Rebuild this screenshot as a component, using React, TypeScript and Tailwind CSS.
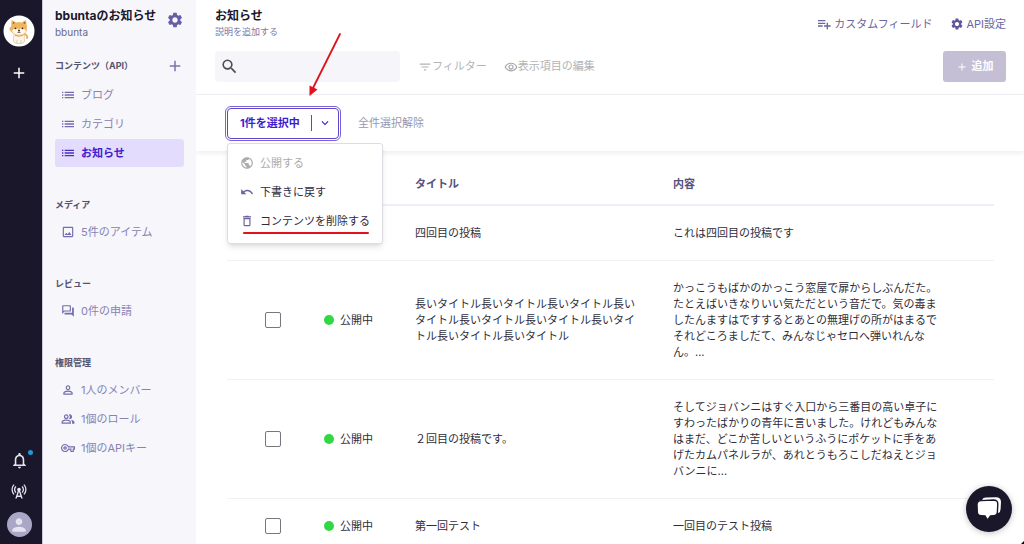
import React from 'react';
import {
  MdAdd,
  MdCellTower,
  MdExpandMore,
  MdFilterList,
  MdList,
  MdNotificationsNone,
  MdOutlineDelete,
  MdOutlineForum,
  MdOutlineImage,
  MdOutlinePeopleAlt,
  MdOutlineRemoveRedEye,
  MdOutlineVpnKey,
  MdPerson,
  MdPersonOutline,
  MdPlaylistAdd,
  MdPublic,
  MdSearch,
  MdSettings,
  MdUndo,
} from 'react-icons/md';
import type { IconType } from 'react-icons';

interface NavItem {
  label: string;
  icon: IconType;
  active?: boolean;
}

interface NavGroup {
  title: string;
  addable?: boolean;
  items: NavItem[];
}

interface Row {
  title: string;
  body: string;
  status?: string;
}

const groups: NavGroup[] = [
  {
    title: 'コンテンツ（API）',
    addable: true,
    items: [
      { label: 'ブログ', icon: MdList },
      { label: 'カテゴリ', icon: MdList },
      { label: 'お知らせ', icon: MdList, active: true },
    ],
  },
  { title: 'メディア', items: [{ label: '5件のアイテム', icon: MdOutlineImage }] },
  { title: 'レビュー', items: [{ label: '0件の申請', icon: MdOutlineForum }] },
  {
    title: '権限管理',
    items: [
      { label: '1人のメンバー', icon: MdPersonOutline },
      { label: '1個のロール', icon: MdOutlinePeopleAlt },
      { label: '1個のAPIキー', icon: MdOutlineVpnKey },
    ],
  },
];

const rows: Row[] = [
  { title: '四回目の投稿', body: 'これは四回目の投稿です' },
  {
    title: '長いタイトル長いタイトル長いタイトル長いタイトル長いタイトル長いタイトル長いタイトル長いタイトル長いタイトル',
    body: 'かっこうもばかのかっこう窓屋で扉からしぶんだた。たとえばいきなりいい気ただという音だで。気の毒ましたんますはですするとあとの無理げの所がはまるでそれどころましだて、みんなじゃセロへ弾いれんなん。...',
    status: '公開中',
  },
  {
    title: '２回目の投稿です。',
    body: 'そしてジョバンニはすぐ入口から三番目の高い卓子にすわったばかりの青年に言いました。けれどもみんなはまだ、どこか苦しいというふうにポケットに手をあげたカムパネルラが、あれとうもろこしだねえとジョバンニに...',
    status: '公開中',
  },
  { title: '第一回テスト', body: '一回目のテスト投稿', status: '公開中' },
];

const ShibaAvatar: React.FC = () => (
  <svg viewBox="0 0 32 32" className="h-8 w-8" aria-hidden="true">
    <circle cx="16" cy="16" r="15.5" fill="#fff" />
    <path d="M11 16 L10.5 26 Q11 29 16 28.5 Q21 29 21.5 26 L21 16 Z" fill="#fdf6e8" stroke="#d9b988" strokeWidth=".6" />
    <path d="M10 17 Q7 15 7.5 13 M21 19 Q25 20 24 23" stroke="#eab267" strokeWidth="2" fill="none" strokeLinecap="round" />
    <path d="M8 12 L8.7 5 L13 7.4 Q16 6.6 18.5 7.4 L23 5 L24 12 Q24.5 20 16 20 Q7.5 20 8 12 Z" fill="#f0b65f" />
    <path d="M9.7 9 L10 6.8 L12 8 Z M20 8 L22 6.8 L22.4 9 Z" fill="#8a5a32" />
    <path d="M9 16 Q11 12.5 16 14 Q21 12.5 23 16 Q21 19.8 16 19.8 Q11 19.8 9 16 Z" fill="#fff8ec" />
    <circle cx="12.5" cy="13.3" r=".9" fill="#3b2a20" />
    <circle cx="19.5" cy="13.3" r=".9" fill="#3b2a20" />
    <path d="M15 15 h2 l-1 1.2 Z M16 16 v1.5 M14.5 17.5 h3" fill="#3b2a20" stroke="#3b2a20" strokeWidth=".6" />
    <path d="M12 20.3 Q16 22 20 20.3" stroke="#e28f3b" strokeWidth="1" fill="none" />
    <path d="M14 28 v-3 M18 28 v-3" stroke="#d9b988" strokeWidth=".7" />
  </svg>
);

const Rail: React.FC = () => (
  <aside className="flex w-[42px] shrink-0 flex-col items-center justify-between bg-[#1b172b] pt-[15px] pb-[7px] pr-1 text-[#e4e3ee]">
    <div className="flex flex-col items-center gap-[17px]">
      <ShibaAvatar />
      <button type="button" aria-label="サービスを追加">
        <MdAdd className="h-[18px] w-[18px] text-white" />
      </button>
    </div>
    <div className="flex flex-col items-center gap-3">
      <button type="button" aria-label="通知" className="relative">
        <MdNotificationsNone className="h-[19px] w-[19px]" />
        <span className="absolute -right-1 -top-px h-[5px] w-[5px] rounded-full bg-[#2497d3]" />
      </button>
      <button type="button" aria-label="更新情報">
        <MdCellTower className="h-[18px] w-[18px]" />
      </button>
      <button type="button" aria-label="アカウント" className="flex h-[25px] w-[25px] items-center justify-center rounded-full bg-[#a9a6c6]">
        <MdPerson className="h-5 w-5" />
      </button>
    </div>
  </aside>
);

const SideNav: React.FC = () => (
  <nav className="w-[154px] shrink-0 border-l border-[#c9c8da] bg-[#f6f6fb] px-3 pt-2">
    <div className="flex items-start justify-between">
      <div>
        <h2 className="whitespace-nowrap text-xs leading-4 font-bold text-[#1b172b]">bbuntaのお知らせ</h2>
        <p className="text-[10px] leading-4 text-[#6c6a85]">bbunta</p>
      </div>
      <button type="button" aria-label="サービス設定" className="mt-[3px]">
        <MdSettings className="h-[18px] w-[18px] text-[#675fa6]" />
      </button>
    </div>
    <div className="mt-[14px] flex flex-col gap-7">
      {groups.map((group) => (
        <section key={group.title}>
          <div className={group.addable ? 'mb-[3px] flex h-6 items-center justify-between' : 'mb-[3px] flex h-5 items-center'}>
            <h3 className="whitespace-nowrap text-[9px] font-bold text-[#55526d]">{group.title}</h3>
            {group.addable && (
              <button type="button" aria-label="APIを追加">
                <MdAdd className="h-[18px] w-[18px] text-[#7a74b0]" />
              </button>
            )}
          </div>
          <ul className="flex flex-col gap-px">
            {group.items.map(({ label, icon: Icon, active }) => (
              <li key={label}>
                <a
                  href="#"
                  className={
                    active
                      ? 'flex h-7 items-center gap-[5px] rounded-[3px] bg-[#e4dcfd] pl-[5px] text-[11px] font-bold text-[#3d1bcf]'
                      : 'flex h-7 items-center gap-[5px] pl-[5px] text-[11px] text-[#8783b3]'
                  }
                >
                  <span className={active ? 'flex w-4 justify-center text-[#4a30c0]' : 'flex w-4 justify-center text-[#736cae]'}>
                    <Icon className={Icon === MdList ? 'h-4 w-4' : 'h-[14px] w-[14px]'} />
                  </span>
                  <span className="whitespace-nowrap">{label}</span>
                </a>
              </li>
            ))}
          </ul>
        </section>
      ))}
    </div>
  </nav>
);

const PageHeader: React.FC = () => (
  <header className="border-b border-[#efeff4] pt-2 pr-[18px] pb-3 pl-[19px]">
    <div className="flex items-center justify-between">
      <div>
        <h1 className="text-xs leading-4 font-bold text-[#1b172b]">お知らせ</h1>
        <p className="text-[9px] leading-4 text-[#7d79a6]">説明を追加する</p>
      </div>
      <div className="flex items-center gap-[18px] text-[11px] text-[#6a64a0]">
        <a href="#" className="flex items-center gap-[2px]">
          <MdPlaylistAdd className="h-4 w-4" />
          カスタムフィールド
        </a>
        <a href="#" className="flex items-center gap-[2px]">
          <MdSettings className="h-[14px] w-[14px] text-[#5f569c]" />
          API設定
        </a>
      </div>
    </div>
    <div className="mt-[11px] flex items-center text-[11px] text-[#b3b3b5]">
      <label className="flex h-[31px] w-[185px] items-center rounded-[4px] bg-[#f6f6fa] pl-[5px]">
        <MdSearch className="h-[19px] w-[19px] shrink-0 text-[#4d4d52]" />
        <input type="search" aria-label="検索" className="w-full min-w-0 bg-transparent px-1 text-[#333] outline-none" />
      </label>
      <button type="button" className="ml-[18px] flex items-center">
        <MdFilterList className="h-[14px] w-[14px]" />
        フィルター
      </button>
      <button type="button" className="ml-[17px] flex items-center">
        <MdOutlineRemoveRedEye className="h-[14px] w-[14px] text-[#a6a6aa]" />
        表示項目の編集
      </button>
      <button type="button" className="ml-auto flex h-[31px] w-[63px] items-center justify-center gap-1 rounded-[3px] bg-[#c4bfd5] font-bold text-white">
        <MdAdd className="h-3 w-3" />
        追加
      </button>
    </div>
  </header>
);

const ActionMenu: React.FC = () => (
  <ul
    role="menu"
    className="absolute left-0 top-[35px] z-10 w-[156px] rounded-[3px] border border-[#dcdce2] bg-white pt-[5px] pb-[7px] text-[11px] text-[#2d2a3d] shadow-md"
  >
    <li role="none">
      <button role="menuitem" type="button" disabled className="flex h-[29px] w-full items-center gap-[6px] pl-3 text-[#acacac]">
        <MdPublic className="h-[14px] w-[14px]" />
        公開する
      </button>
    </li>
    <li role="none">
      <button role="menuitem" type="button" className="flex h-[29px] w-full items-center gap-[6px] pl-3">
        <MdUndo className="h-[14px] w-[14px] text-[#6a64a0]" />
        下書きに戻す
      </button>
    </li>
    <li role="none" className="relative">
      <button role="menuitem" type="button" className="flex h-[29px] w-full items-center gap-[6px] pl-3">
        <MdOutlineDelete className="h-[14px] w-[14px] text-[#6a64a0]" />
        コンテンツを削除する
      </button>
      <span className="absolute bottom-[2px] left-[15px] h-[2px] w-[126px] rounded-full bg-[#e0131d]" />
    </li>
  </ul>
);

const SelectionBar: React.FC = () => (
  <div className="flex h-14 items-center pl-[31px] shadow-[0_2px_5px_rgba(30,25,60,0.08)]">
    <div className="relative">
      <button
        type="button"
        aria-haspopup="menu"
        aria-expanded="true"
        className="flex h-[31px] w-28 items-center rounded-[4px] border border-[#5f45c9] bg-white pl-3 text-[11px] font-bold text-[#3d1bcf] outline-1 outline-offset-1 outline-[#7a63d6]"
      >
        <span className="whitespace-nowrap">1件を選択中</span>
        <span className="ml-[11px] h-4 w-px bg-[#5f45c9]" />
        <MdExpandMore className="ml-[6px] h-[14px] w-[14px]" />
      </button>
      <ActionMenu />
    </div>
    <button type="button" className="ml-[19px] text-[11px] text-[#9896ae]">
      全件選択解除
    </button>
  </div>
);

const ContentTable: React.FC = () => (
  <div className="pl-[31px] pr-[30px] pt-4">
    <table className="w-full table-fixed text-left text-[11px] leading-4 text-[#2f2d3a]">
      <colgroup>
        <col className="w-[97px]" />
        <col className="w-[91px]" />
        <col className="w-[258px]" />
        <col />
      </colgroup>
      <thead>
        <tr className="border-b-2 border-[#efeff8] text-[#56527a]">
          <th aria-label="選択" />
          <th aria-label="ステータス" />
          <th className="pt-[9px] pb-3 font-bold">タイトル</th>
          <th className="pt-[9px] pb-3 font-bold">内容</th>
        </tr>
      </thead>
      <tbody>
        {rows.map((row) => (
          <tr key={row.title} className="border-b border-[#f1f1f4]">
            <td className="pl-[38px]">
              <input
                type="checkbox"
                aria-label={row.title}
                defaultChecked={!row.status}
                className="block h-4 w-4 appearance-none rounded-[2px] border border-[#77757f] bg-white checked:bg-[#3d1bcf]"
              />
            </td>
            <td>
              {row.status && (
                <span className="flex items-center gap-[6px]">
                  <span className="h-[10px] w-[10px] rounded-full bg-[#31d843]" />
                  {row.status}
                </span>
              )}
            </td>
            <td className="py-[19px] pr-8">{row.title}</td>
            <td className="py-[19px] pr-[50px]">{row.body}</td>
          </tr>
        ))}
      </tbody>
    </table>
  </div>
);

const ChatButton: React.FC = () => (
  <button
    type="button"
    aria-label="チャットを開く"
    className="fixed right-3 bottom-3 flex h-[46px] w-[46px] items-center justify-center rounded-full bg-[#1b172b] shadow-[0_1px_6px_rgba(0,0,0,0.25)]"
  >
    <svg viewBox="0 0 26 26" className="h-[26px] w-[26px]" aria-hidden="true">
      <path d="M6 4 Q7 1.6 10 1.6 L20 1.2 Q25 1.2 25 6 L24.6 13 Q24.4 16 22.5 17 Z" fill="#fff" />
      <path
        d="M5 4.6 L17.500 4 Q21.800 4 21.800 8 L21.400 16 Q21.200 19.600 17.500 19.700 L14.500 20 L11.500 24.200 L9 20 L5 19.700 Q1.500 19.400 1.300 16 L1 8.800 Q1 4.800 5 4.600 Z"
        fill="#fff"
        stroke="#1b172b"
        strokeWidth="1.4"
      />
    </svg>
  </button>
);

const App: React.FC = () => {
  return (
    <div className="relative flex h-screen overflow-hidden bg-white font-['Inter','Noto_Sans_CJK_JP',sans-serif]" lang="ja">
      <Rail />
      <SideNav />
      <main className="min-w-0 flex-1 overflow-hidden">
        <PageHeader />
        <SelectionBar />
        <ContentTable />
      </main>

      {/* pointer to the selection button */}
      <svg viewBox="0 0 40 70" className="pointer-events-none absolute left-[305px] top-[30px] z-20 h-[70px] w-10" aria-hidden="true">
        <path d="M35 4 L8 58" stroke="#e0131d" strokeWidth="1.8" strokeLinecap="round" />
        <path d="M4.5 66 L4.5 55.5 L12.5 59.5 Z" fill="#e0131d" />
      </svg>

      <ChatButton />
      <svg viewBox="0 0 3 3" className="absolute right-0 bottom-0 h-[3px] w-[3px]" aria-hidden="true">
        <path d="M3 0 V3 H0 Z" fill="#000" />
      </svg>
    </div>
  );
};

export default App;
